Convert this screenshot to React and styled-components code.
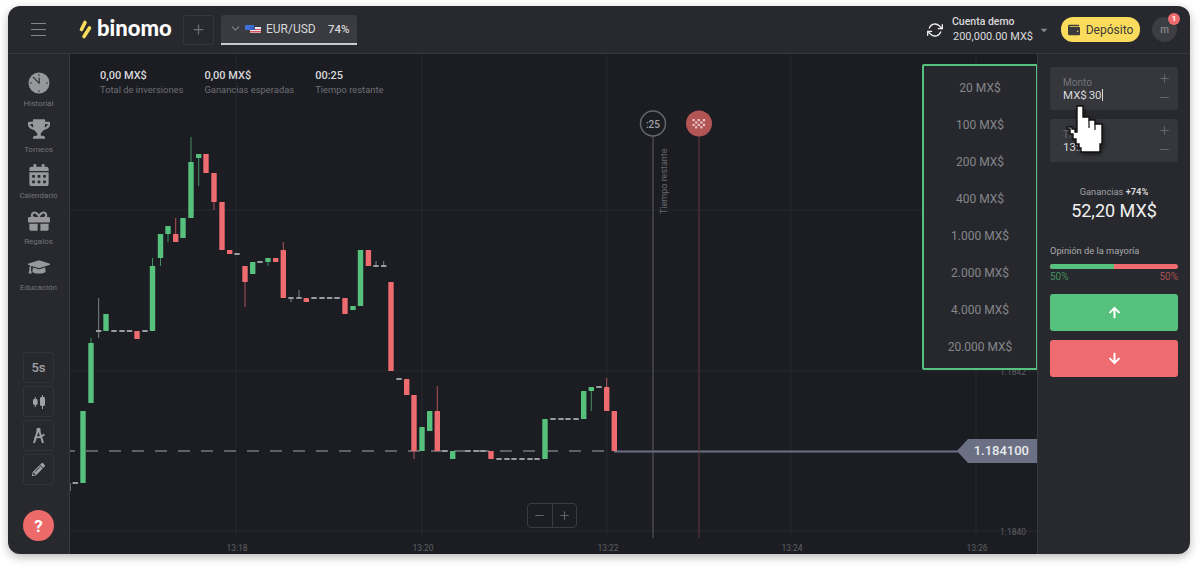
import React from "react";
import styled, { createGlobalStyle } from "styled-components";
import { FaTrophy, FaCalendarAlt, FaGift, FaGraduationCap, FaPencilAlt, FaArrowUp, FaArrowDown, FaWallet, FaCaretDown } from "react-icons/fa";
import { FiChevronDown, FiPlus, FiMinus, FiRefreshCw } from "react-icons/fi";

const GlobalStyle = createGlobalStyle`
    html, body {
        margin: 0;
        background: #fff;
    }
    #root {
        padding: 6px 10px 13px 8px;
        font-family: Roboto, "Liberation Sans", sans-serif;
    }
`

const Window = styled.div`
    width: 1182px;
    height: 548px;
    border-radius: 12px;
    overflow: hidden;
    background: #28292e;
    box-shadow: 0 3px 10px rgba(0, 0, 0, 0.28);
    display: flex;
    flex-direction: column;
`
const Header = styled.header`
    height: 48px;
    flex: none;
    box-sizing: border-box;
    border-bottom: 1px solid #37383d;
    display: flex;
    align-items: center;
    padding-left: 23px;
    padding-right: 13px;
`
const Burger = styled.div`
    width: 15px;
    height: 13px;
    margin-right: 33px;
    border-top: 1px solid #85868a;
    border-bottom: 1px solid #85868a;
    box-sizing: border-box;
    display: flex;
    align-items: center;
    &::before {
        content: "";
        width: 100%;
        height: 1px;
        background: #85868a;
    }
`
const Logo = styled.div`
    display: flex;
    align-items: center;
    gap: 5px;
    width: 104px;
`
const LogoText = styled.span`
    font-family: Lato, sans-serif;
    font-size: 22px;
    font-weight: 900;
    color: #fff;
    line-height: 1;
    margin-top: -3px;
`
const PlusButton = styled.div`
    width: 31px;
    height: 30px;
    box-sizing: border-box;
    border: 1px solid #36373c;
    border-radius: 3px;
    display: flex;
    align-items: center;
    justify-content: center;
    color: #6e6f74;
    font-size: 15px;
    margin-right: 7px;
`
const PairTab = styled.div`
    width: 136px;
    height: 30px;
    box-sizing: border-box;
    background: #3a3b40;
    border-bottom: 2px solid #c9cacc;
    border-radius: 3px 3px 0 0;
    display: flex;
    align-items: center;
    gap: 3px;
    padding-left: 8px;
    color: #85868a;
    font-size: 13px;
`
const PairName = styled.span`
    font-size: 12px;
    color: #d6d7d9;
    margin-left: 2px;
    width: 62px;
`
const Percent = styled.span`
    font-size: 11.5px;
    font-weight: 500;
    color: #d6d7d9;
    margin-left: -3px;
`
const HeaderRight = styled.div`
    margin-left: auto;
    display: flex;
    align-items: center;
`
const SyncIcon = styled(FiRefreshCw)`
    font-size: 16px;
    color: #eee;
    margin-right: 9px;
`
const Account = styled.div`
    display: flex;
    flex-direction: column;
    gap: 2px;
    width: 87px;
`
const AccountName = styled.span`
    font-size: 10.5px;
    font-weight: 500;
    color: #d8d9db;
    line-height: 12px;
`
const AccountBalance = styled.span`
    font-size: 11px;
    color: #d8d9db;
    line-height: 14px;
    margin-left: 1px;
`
const Caret = styled(FaCaretDown)`
    font-size: 10px;
    color: #85868a;
    margin-right: 12px;
`
const DepositButton = styled.div`
    width: 79px;
    height: 25px;
    background: #fbdb5b;
    border-radius: 12px;
    display: flex;
    align-items: center;
    justify-content: center;
    gap: 6px;
    color: #3b3b3b;
    font-size: 12px;
    margin-right: 12px;
`
const Avatar = styled.div`
    position: relative;
    width: 25px;
    height: 25px;
    border-radius: 50%;
    background: #3d3e43;
    color: #85868a;
    font-size: 10px;
    font-weight: 500;
    display: flex;
    align-items: center;
    justify-content: center;
`
const Badge = styled.span`
    position: absolute;
    top: -4px;
    right: -3px;
    width: 12px;
    height: 12px;
    border-radius: 50%;
    background: #ee6b6f;
    color: #fff;
    font-size: 8px;
    font-weight: 700;
    line-height: 12px;
    text-align: center;
`
const Body = styled.div`
    flex: 1;
    display: flex;
    min-height: 0;
`
const Sidebar = styled.aside`
    width: 62px;
    flex: none;
    box-sizing: border-box;
    border-right: 1px solid #37383d;
    padding: 18px 0 13px;
    display: flex;
    flex-direction: column;
    align-items: center;
`
const NavItem = styled.div`
    width: 100%;
    height: 46px;
    display: flex;
    flex-direction: column;
    align-items: center;
    color: #97989c;
    font-size: 22px;
`
const NavIcon = styled.div`
    height: 22px;
    display: flex;
    align-items: center;
    justify-content: center;
`
const NavLabel = styled.span`
    font-size: 8px;
    line-height: 10px;
    margin-top: 5px;
    color: #737479;
`
const Tools = styled.div`
    margin-top: auto;
    display: flex;
    flex-direction: column;
    align-items: center;
    gap: 3px;
`
const ToolButton = styled.div`
    width: 31px;
    height: 31px;
    box-sizing: border-box;
    border: 1px solid #333439;
    border-radius: 3px;
    display: flex;
    align-items: center;
    justify-content: center;
    color: #a0a1a5;
    font-size: 13px;
    font-weight: 500;
`
const HelpButton = styled.div`
    width: 31px;
    height: 31px;
    margin-top: 25px;
    border-radius: 50%;
    background: #ed6a6a;
    color: #fff;
    font-size: 17px;
    font-weight: 700;
    display: flex;
    align-items: center;
    justify-content: center;
`
const Chart = styled.main`
    position: relative;
    flex: 1;
    background: #1c1d22;
    min-width: 0;
    overflow: hidden;
`
const ChartSvg = styled.svg`
    position: absolute;
    inset: 0;
    display: block;
`
const Stats = styled.div`
    position: relative;
    display: flex;
    gap: 21px;
    padding: 15px 0 0 30px;
`
const Stat = styled.div`
    display: flex;
    flex-direction: column;
`
const StatValue = styled.span`
    font-size: 11px;
    font-weight: 500;
    line-height: 14px;
    color: #d8d9db;
`
const StatLabel = styled.span`
    font-size: 9.4px;
    line-height: 13px;
    color: #6d6e73;
`
const AmountMenu = styled.ul`
    position: absolute;
    top: 10px;
    right: -1px;
    width: 116px;
    height: 306px;
    box-sizing: border-box;
    margin: 0;
    padding: 3px 0;
    list-style: none;
    background: #27282d;
    border: 2px solid #56c17c;
    border-radius: 2px;
    display: flex;
    flex-direction: column;
`
const AmountItem = styled.li`
    height: 37px;
    flex: none;
    display: flex;
    align-items: center;
    justify-content: center;
    font-size: 12px;
    color: #85868a;
`
const ZoomControls = styled.div`
    position: absolute;
    left: 457px;
    bottom: 26px;
    width: 50px;
    height: 25px;
    box-sizing: border-box;
    border: 1px solid #3a3b40;
    border-radius: 4px;
    display: flex;
    color: #64656a;
    font-size: 13px;
`
const ZoomButton = styled.div`
    flex: 1;
    display: flex;
    align-items: center;
    justify-content: center;
    & + & {
        border-left: 1px solid #3a3b40;
    }
`
const PriceTag = styled.div`
    position: absolute;
    top: 385px;
    right: 0;
    width: 80px;
    height: 24px;
    box-sizing: border-box;
    padding-right: 8px;
    background: #6b7085;
    clip-path: polygon(0 50%, 11px 0, 100% 0, 100% 100%, 11px 100%);
    color: #e8e9ec;
    font-size: 13px;
    font-weight: 500;
    line-height: 24px;
    text-align: right;
`
const Panel = styled.aside`
    width: 153px;
    flex: none;
    box-sizing: border-box;
    border-left: 1px solid #37383d;
    padding: 13px 12px 0 12px;
    display: flex;
    flex-direction: column;
`
const Field = styled.div`
    width: 128px;
    height: 43px;
    flex: none;
    box-sizing: border-box;
    background: #36373c;
    border-radius: 3px;
    padding: 10px 0 0 13px;
    margin-bottom: 9px;
    position: relative;
    display: flex;
    flex-direction: column;
`
const FieldLabel = styled.span`
    font-size: 10px;
    line-height: 12px;
    color: #737479;
`
const FieldValue = styled.span`
    font-size: 11.5px;
    line-height: 14px;
    margin-top: -1px;
    word-spacing: -1px;
    color: #d8d9db;
`
const Cursor = styled.span`
    display: inline-block;
    width: 1px;
    height: 12px;
    background: #d8d9db;
    vertical-align: -2px;
`
const Steppers = styled.div`
    position: absolute;
    right: 7px;
    top: 5px;
    bottom: 6px;
    display: flex;
    flex-direction: column;
    justify-content: space-between;
    color: #66676c;
    font-size: 13px;
`
const Profit = styled.div`
    margin-top: 15px;
    display: flex;
    flex-direction: column;
    align-items: center;
`
const ProfitLabel = styled.span`
    font-size: 9.3px;
    line-height: 12px;
    color: #a0a1a5;
    b {
        color: #d8d9db;
        font-weight: 700;
    }
`
const ProfitValue = styled.span`
    font-size: 18px;
    line-height: 22px;
    margin-top: 2px;
    color: #f2f2f3;
`
const OpinionTitle = styled.div`
    margin-top: 23px;
    font-size: 9.3px;
    line-height: 12px;
    color: #a8a9ad;
`
const OpinionBar = styled.div`
    height: 5px;
    margin-top: 7px;
    border-radius: 3px;
    overflow: hidden;
    display: flex;
    background: #ee6b6f;
`
const OpinionFill = styled.div`
    background: #56c17c;
`
const OpinionLegend = styled.div`
    display: flex;
    justify-content: space-between;
    font-size: 10px;
    line-height: 12px;
    margin-top: 2px;
`
const LegendValue = styled.span`
    color: ${(p) => (p.$up ? "#3f8f5c" : "#a84f52")};
`
const TradeButton = styled.div`
    height: 37px;
    margin-top: ${(p) => (p.$up ? "11px" : "9px")};
    background: ${(p) => (p.$up ? "#56c17c" : "#ee6b6f")};
    border-radius: 3px;
    display: flex;
    align-items: center;
    justify-content: center;
    color: #fff;
    font-size: 13px;
`
const Hand = styled.svg`
    position: absolute;
    left: 1066px;
    top: 104px;
    filter: drop-shadow(1px 2px 2px rgba(0, 0, 0, 0.5));
`

const GREEN = "#56c17c"
const RED = "#ee6b6f"
const GREY = "#9a9ba0"

// x, top, bottom, wick top, wick bottom
const greens = [
    [83, 411, 483], [91, 343, 403, 338], [106, 314, 331], [152.5, 266, 331, 258],
    [160.5, 234, 258, 234, 266], [168, 226, 234, 226, 242], [183, 218, 238], [191, 162, 218, 137],
    [198.7, 154, 158, 154, 186], [252.7, 262, 274], [268, 258, 262, 258, 266], [353, 306, 310],
    [360.5, 250, 306], [422, 427, 451], [429.7, 411, 431], [452.7, 451, 459], [545, 419, 459],
    [583.7, 391, 419], [591.3, 387, 391, 387, 411],
]
const reds = [
    [137, 331, 339], [175.7, 234, 242, 218], [206, 154, 173], [214, 173, 202, 173, 210], [222, 202, 250],
    [229.7, 250, 254], [245, 266, 282, 266, 307], [275.7, 258, 262], [283.3, 250, 298, 242], [306.3, 298, 302],
    [345, 298, 314], [368.4, 250, 266], [391, 282, 371], [406.7, 379, 395], [414, 395, 451, 395, 459],
    [437.3, 411, 451, 386], [491, 451, 459], [606.7, 387, 411, 378], [614.3, 411, 451],
]
const dashes = [
    [75.3, 483], [114, 331], [122, 331], [129.5, 331], [145, 331], [237, 254], [260, 262],
    [314, 298], [322, 298], [329.6, 298], [337, 298], [399, 379], [445, 451], [468, 451], [476, 451], [483, 451],
    [499, 459], [507, 459], [514, 459], [522, 459], [530, 459], [537, 459],
    [553, 419], [561, 419], [568, 419], [576, 419], [599, 387],
]
const dojis = [[98.7, 331, 298, 338], [291, 298, 298, 302], [299, 298, 290, 298], [376, 266, 261, 266], [383.7, 266, 261, 266]]
const gridX = [236, 422, 607, 791, 976]
const gridY = [210, 371, 531]
const times = ["13:18", "13:20", "13:22", "13:24", "13:26"]

function Candle({ c, color }) {
    const [x, top, bottom, wickTop, wickBottom] = c
    return (
        <g fill={color}>
            {wickTop !== undefined && (
                <line x1={x} x2={x} y1={wickTop} y2={wickBottom ?? top} stroke={color} strokeOpacity="0.7" />
            )}
            <rect x={x - 2.7} y={top} width="5.4" height={bottom - top} rx="0.5" />
        </g>
    )
}

function CandleChart() {
    return (
        <ChartSvg width="967" height="500" viewBox="70 54 967 500">
            {gridX.map((x) => <line key={x} x1={x} x2={x} y1="54" y2="538" stroke="#27282d" />)}
            {gridY.map((y) => <line key={y} x1="70" x2="1037" y1={y} y2={y} stroke="#27282d" />)}
            {gridX.map((x, i) => (
                <text key={x} x={x + 1} y="551" textAnchor="middle" fontSize="8.5" fill="#5f6065" fontFamily="Roboto">{times[i]}</text>
            ))}
            <text x="1013" y="375" textAnchor="middle" fontSize="8.5" fill="#5f6065" fontFamily="Roboto">1.1842</text>
            <text x="1013" y="535" textAnchor="middle" fontSize="8.5" fill="#5f6065" fontFamily="Roboto">1.1840</text>

            <line x1="70" x2="614" y1="451" y2="451" stroke="#77787d" strokeWidth="1.5" strokeDasharray="12 11" strokeDashoffset="-16" />
            <line x1="614" x2="960" y1="451.5" y2="451.5" stroke="#6b7085" strokeWidth="2" />
            <line x1="70.5" x2="70.5" y1="483" y2="491" stroke="#66676c" />

            {dashes.map(([x, y]) => <rect key={x} x={x - 2.7} y={y - 1} width="5.4" height="2" fill={GREY} />)}
            {dojis.map(([x, y, w1, w2]) => (
                <g key={x}>
                    <line x1={x} x2={x} y1={w1} y2={w2} stroke={GREY} strokeOpacity="0.8" />
                    <rect x={x - 2.7} y={y - 1} width="5.4" height="2" fill={GREY} />
                </g>
            ))}
            {greens.map((c) => <Candle key={c[0]} c={c} color={GREEN} />)}
            {reds.map((c) => <Candle key={c[0]} c={c} color={RED} />)}

            <line x1="653" x2="653" y1="136" y2="538" stroke="#5e5f64" />
            <circle cx="653" cy="123.5" r="12.5" fill="#1c1d22" stroke="#66676c" strokeWidth="1.5" />
            <text x="653" y="127.5" textAnchor="middle" fontSize="10" fontWeight="500" fill="#a0a1a5" fontFamily="Roboto">:25</text>
            <text transform="translate(667 214) rotate(-90)" fontSize="9" fill="#66676c" fontFamily="Roboto">Tiempo restante</text>

            <line x1="699" x2="699" y1="136" y2="538" stroke="#5c3a3c" />
            <circle cx="699" cy="123.5" r="13" fill="#b35555" />
            <g fill="#e6c6c6">
                {[0, 1, 2, 3].flatMap((r) =>
                    [0, 1, 2, 3, 4].map((k) =>
                        (r + k) % 2 === 0 ? <rect key={`${r}${k}`} x={692.5 + k * 2.6} y={119 + r * 2.4} width="2.2" height="2.2" /> : null
                    )
                )}
            </g>
        </ChartSvg>
    )
}

function LogoMark() {
    return (
        <svg width="13" height="19" viewBox="0 0 13 19">
            <line x1="2.5" y1="9.5" x2="6" y2="2.5" stroke="#fbdb5b" strokeWidth="3.6" strokeLinecap="round" />
            <line x1="5" y1="16.5" x2="10.5" y2="8" stroke="#fbdb5b" strokeWidth="3.6" strokeLinecap="round" />
        </svg>
    )
}

function FlagIcon() {
    return (
        <svg width="16" height="10" viewBox="0 0 16 10">
            <rect x="0" y="1" width="9" height="5" rx="1" fill="#3f6fd8" />
            <rect x="5" y="3" width="11" height="6" fill="#e9e9ee" />
            <rect x="5" y="5" width="11" height="1" fill="#d9535a" />
            <rect x="5" y="7" width="11" height="1.5" fill="#d9535a" />
            <rect x="5" y="3" width="5" height="3" fill="#3a5bb0" />
        </svg>
    )
}

function ClockIcon() {
    return (
        <svg width="22" height="22" viewBox="0 0 22 22">
            <circle cx="11" cy="11" r="10.5" fill="#97989c" />
            <path d="M5 5 L11.5 11.5 M11.5 11.5 L11 5.5" stroke="#3a3b40" strokeWidth="1.3" fill="none" />
            <g fill="#3a3b40">
                <rect x="10.5" y="2" width="1" height="2" />
                <rect x="10.5" y="18" width="1" height="2" />
                <rect x="2" y="10.5" width="2" height="1" />
                <rect x="18" y="10.5" width="2" height="1" />
            </g>
        </svg>
    )
}

function CandlesIcon() {
    return (
        <svg width="16" height="14" viewBox="0 0 16 14" fill="#a0a1a5">
            <rect x="2" y="4" width="4.6" height="6" rx="1.4" />
            <rect x="3.8" y="2" width="1" height="10" />
            <rect x="9" y="2" width="5" height="9" rx="1.4" />
            <rect x="11" y="0" width="1" height="14" />
        </svg>
    )
}

function CompassIcon() {
    return (
        <svg width="13" height="17" viewBox="0 0 13 17" fill="none" stroke="#a0a1a5" strokeWidth="2">
            <circle cx="6.5" cy="3" r="2.2" fill="#a0a1a5" stroke="none" />
            <path d="M5.7 4 L2 16 M7.3 4 L11 16" />
            <path d="M2.5 10.5 Q8 11 12.5 7.5" strokeWidth="1.6" />
        </svg>
    )
}

function HandCursor() {
    return (
        <Hand width="38" height="52" viewBox="0 0 38 52">
            <path
                d="M11 2 h6 v11 h6 v3 h6 v4 h7 v20 h-2 v8 H15 v-4 h-2 v-4 h-3 v-5 H7 v-5 H4 v-5 H1 v-2 h5 v2 h3 v3 h2 z"
                fill="#fff"
                stroke="#111"
                strokeWidth="1.4"
            />
            <path d="M23 16 v8 M29 20 v6" stroke="#111" strokeWidth="1.2" />
        </Hand>
    )
}

const navItems = [
    { label: "Historial", icon: <ClockIcon /> },
    { label: "Torneos", icon: <FaTrophy /> },
    { label: "Calendario", icon: <FaCalendarAlt /> },
    { label: "Regalos", icon: <FaGift /> },
    { label: "Educación", icon: <FaGraduationCap /> },
]
const stats = [
    { value: "0,00 MX$", label: "Total de inversiones" },
    { value: "0,00 MX$", label: "Ganancias esperadas" },
    { value: "00:25", label: "Tiempo restante" },
]
const amounts = ["20 MX$", "100 MX$", "200 MX$", "400 MX$", "1.000 MX$", "2.000 MX$", "4.000 MX$", "20.000 MX$"]

export default function App() {
    return (
        <>
            <GlobalStyle />
            <Window>
                <Header>
                    <Burger />
                    <Logo>
                        <LogoMark />
                        <LogoText>binomo</LogoText>
                    </Logo>
                    <PlusButton><FiPlus /></PlusButton>
                    <PairTab>
                        <FiChevronDown />
                        <FlagIcon />
                        <PairName>EUR/USD</PairName>
                        <Percent>74%</Percent>
                    </PairTab>
                    <HeaderRight>
                        <SyncIcon />
                        <Account>
                            <AccountName>Cuenta demo</AccountName>
                            <AccountBalance>200,000.00 MX$</AccountBalance>
                        </Account>
                        <Caret />
                        <DepositButton><FaWallet />Depósito</DepositButton>
                        <Avatar>m<Badge>1</Badge></Avatar>
                    </HeaderRight>
                </Header>
                <Body>
                    <Sidebar>
                        {navItems.map((item) => (
                            <NavItem key={item.label}>
                                <NavIcon>{item.icon}</NavIcon>
                                <NavLabel>{item.label}</NavLabel>
                            </NavItem>
                        ))}
                        <Tools>
                            <ToolButton>5s</ToolButton>
                            <ToolButton><CandlesIcon /></ToolButton>
                            <ToolButton><CompassIcon /></ToolButton>
                            <ToolButton><FaPencilAlt /></ToolButton>
                        </Tools>
                        <HelpButton>?</HelpButton>
                    </Sidebar>
                    <Chart>
                        <CandleChart />
                        <Stats>
                            {stats.map((s) => (
                                <Stat key={s.label}>
                                    <StatValue>{s.value}</StatValue>
                                    <StatLabel>{s.label}</StatLabel>
                                </Stat>
                            ))}
                        </Stats>
                        <AmountMenu>
                            {amounts.map((a) => <AmountItem key={a}>{a}</AmountItem>)}
                        </AmountMenu>
                        <ZoomControls>
                            <ZoomButton><FiMinus /></ZoomButton>
                            <ZoomButton><FiPlus /></ZoomButton>
                        </ZoomControls>
                        <PriceTag>1.184100</PriceTag>
                    </Chart>
                    <Panel>
                        <Field>
                            <FieldLabel>Monto</FieldLabel>
                            <FieldValue>MX$ 30<Cursor /></FieldValue>
                            <Steppers><FiPlus /><FiMinus /></Steppers>
                        </Field>
                        <Field>
                            <FieldLabel>Tiempo</FieldLabel>
                            <FieldValue>13:23</FieldValue>
                            <Steppers><FiPlus /><FiMinus /></Steppers>
                        </Field>
                        <Profit>
                            <ProfitLabel>Ganancias <b>+74%</b></ProfitLabel>
                            <ProfitValue>52,20 MX$</ProfitValue>
                        </Profit>
                        <OpinionTitle>Opinión de la mayoría</OpinionTitle>
                        <OpinionBar><OpinionFill style={{ width: "50%" }} /></OpinionBar>
                        <OpinionLegend>
                            <LegendValue $up>50%</LegendValue>
                            <LegendValue>50%</LegendValue>
                        </OpinionLegend>
                        <TradeButton $up><FaArrowUp /></TradeButton>
                        <TradeButton><FaArrowDown /></TradeButton>
                    </Panel>
                </Body>
            </Window>
            <HandCursor />
        </>
    )
}
